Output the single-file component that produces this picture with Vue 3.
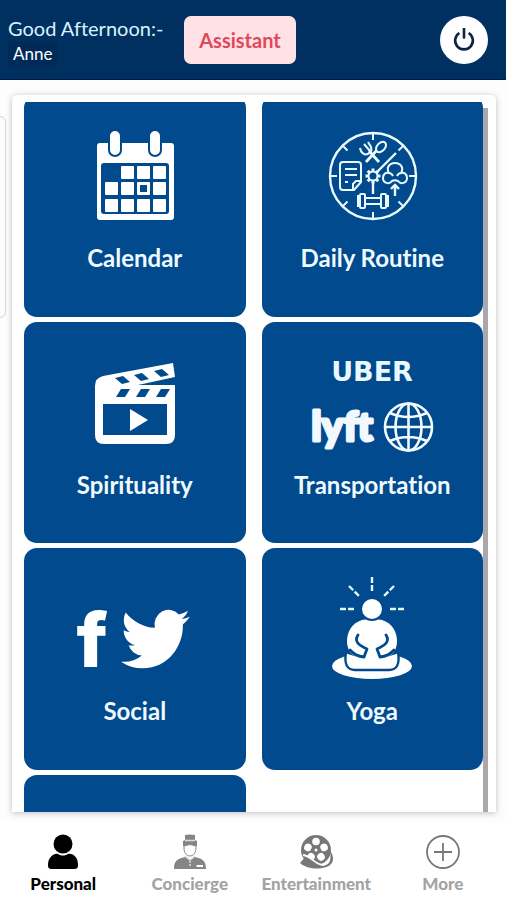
<script setup>
import { ref } from 'vue'

const user = ref('Anne')
const activeTab = ref('personal')

const cards = [
  { id: 'calendar', label: 'Calendar' },
  { id: 'routine', label: 'Daily Routine' },
  { id: 'spirituality', label: 'Spirituality' },
  { id: 'transportation', label: 'Transportation' },
  { id: 'social', label: 'Social' },
  { id: 'yoga', label: 'Yoga' },
  { id: 'blank', label: '' }
]

const tabs = [
  { id: 'personal', label: 'Personal' },
  { id: 'concierge', label: 'Concierge' },
  { id: 'entertainment', label: 'Entertainment' },
  { id: 'more', label: 'More' }
]

// day squares in the calendar icon
const days = [
  [121, 167], [137, 167], [153, 167],
  [105, 183], [121, 183], [137, 183], [153, 183],
  [105, 200], [121, 200], [137, 200], [153, 200]
]

const ticks = [0, 45, 90, 135, 180, 225, 270, 315]
const holes = [0, 72, 144, 216, 288]
</script>

<template>
  <div class="app">
    <header class="header">
      <div class="greeting">
        <span class="hello">Good Afternoon:-</span>
        <span class="name">{{ user }}</span>
      </div>
      <button class="assistant">Assistant</button>
      <button class="power" aria-label="Log out">
        <svg width="24" height="24" viewBox="0 0 26 26" fill="none" stroke="#0b2340" stroke-width="2.8">
          <path d="M8 5.400a9.600 9.600 0 1 0 10 0" />
          <path d="M13 0v11.500" />
        </svg>
      </button>
    </header>

    <main class="main">
      <div class="side-edge"></div>
      <section class="panel">
        <div class="scroller">
          <div class="grid">
            <button v-for="card in cards" :key="card.id" class="card" :aria-label="card.label || 'Open'">
              <svg v-if="card.id === 'calendar'" class="icon" viewBox="55 120 160 110">
                <rect x="97" y="144" width="77" height="77" rx="3" fill="#fff" />
                <rect x="101" y="164" width="68" height="51" rx="3" fill="#004a8d" />
                <rect x="109" y="131" width="12" height="26" rx="6" fill="#fff" stroke="#004a8d" stroke-width="2" />
                <rect x="149" y="131" width="12" height="26" rx="6" fill="#fff" stroke="#004a8d" stroke-width="2" />
                <rect v-for="(d, i) in days" :key="i" :x="d[0]" :y="d[1]" width="13" height="13" rx="1" fill="#fff" />
                <rect x="140" y="186" width="7" height="7" fill="#004a8d" />
              </svg>

              <svg v-else-if="card.id === 'routine'" class="icon" viewBox="292 119 160 110" fill="none" stroke="#e9fbff" stroke-width="2">
                <circle cx="373" cy="176" r="43" stroke-width="2.4" />
                <path v-for="t in ticks" :key="t" d="M373 133v7" :transform="`rotate(${t} 373 176)`" />
                <circle cx="373" cy="176" r="4.5" />
                <path v-for="t in ticks" :key="'g' + t" d="M373 168.500v3" stroke-width="3" :transform="`rotate(${t} 373 176)`" />
                <path d="M377 172l19-19M373 182v12" stroke-width="2.4" />
                <path d="M379 162l-10-11M366 162l11-12" stroke-width="2.8" />
                <path d="M360 148c1 6 6 8 9 5M364 144l6 7M368 142l3 5c1 4 0 5-3 7" />
                <ellipse cx="381" cy="147" rx="4" ry="6" transform="rotate(42 381 147)" />
                <path d="M343 162h15a3 3 0 0 1 3 3v17l-7 8h-11a3 3 0 0 1-3-3v-22a3 3 0 0 1 3-3zM361 181h-5l-3 3v6M345 169h12M345 175h12M345 182h3" />
                <path d="M392 181c-3 4-9 2-9-3 0-4 3-6 6-5-3-5 0-10 6-10s9 5 6 10c3-1 6 1 6 5 0 5-6 7-9 3-2-1-4-1-6 0zM389 173c2 0 3 1 4 3M401 173c-2 0-3 1-4 3" />
                <path d="M395 196v-11M391 189l4-4 4 4" stroke-width="2.400" />
                <path d="M365 198h16M365 204h16" />
                <rect x="360" y="194" width="5" height="14" rx="1" />
                <rect x="381" y="194" width="5" height="14" rx="1" />
                <path d="M360 196h-2v10h2M386 196h2v10h-2" />
              </svg>

              <svg v-else-if="card.id === 'spirituality'" class="icon" viewBox="55 346 160 110" fill="#fff">
                <path d="M95 386q0-8 8-10l70-13 2 14-37 8h37v50q0 9-9 9h-62q-9 0-9-9z" />
                <path d="M103 404h64v31h-64z" fill="#004a8d" />
                <path d="M115 378l8-2 7 6-8 2zM134 375l8-2 7 6-8 2zM154 371l8-2 7 6-8 2zM121 389h9l-5 8h-9zM141 389h9l-5 8h-9zM161 389h9l-5 8h-9z" fill="#004a8d" />
                <path d="M130 409l18 11-18 11z" />
              </svg>

              <svg v-else-if="card.id === 'transportation'" class="icon" viewBox="292 346 160 110">
                <text class="uber" x="372" y="381" text-anchor="middle">UBER</text>
                <text class="lyft" x="342" y="441" text-anchor="middle">lyft</text>
                <g fill="none" stroke="#f2fbff" stroke-width="2.600">
                  <circle cx="408.500" cy="427" r="23.500" />
                  <ellipse cx="408.500" cy="427" rx="13" ry="23.500" />
                  <path d="M408.500 403v48M385 427h47M390 413q18 8 37 0M390 441q18-8 37 0" />
                </g>
              </svg>

              <svg v-else-if="card.id === 'social'" class="icon" viewBox="55 571 160 110" fill="#fff">
                <text class="facebook" x="92" y="666" text-anchor="middle">f</text>
                <path transform="translate(121 602) scale(2.87 3)" d="M23.953 4.570a10 10 0 01-2.825.775 4.958 4.958 0 002.163-2.723c-.951.555-2.005.959-3.127 1.184a4.920 4.920 0 00-8.384 4.482C7.690 8.095 4.067 6.130 1.640 3.162a4.822 4.822 0 00-.666 2.475c0 1.710.870 3.213 2.188 4.096a4.904 4.904 0 01-2.228-.616v.060a4.923 4.923 0 003.946 4.827 4.996 4.996 0 01-2.212.085 4.936 4.936 0 004.604 3.417 9.867 9.867 0 01-6.102 2.105c-.390 0-.779-.023-1.170-.067a13.995 13.995 0 007.557 2.209c9.053 0 13.998-7.496 13.998-13.985 0-.210 0-.420-.015-.630A9.935 9.935 0 0024 4.590z" />
              </svg>

              <svg v-else-if="card.id === 'yoga'" class="icon" viewBox="292 572 160 110" fill="#fff">
                <ellipse cx="372" cy="666" rx="40" ry="13" />
                <path d="M346 652c-2 12 1 18 9 18h34c8 0 11-6 9-18l-9 3h-34z" stroke="#004a8d" stroke-width="2.400" />
                <path d="M362 620q10-2 20 0c10 3 15 12 15 21 0 7-3 12-6 14l-10 4h-18l-10-4c-3-2-6-7-6-14 0-9 5-18 15-21z" />
                <path d="M358 635c-4 6 0 10 9 14l-3 8q-9-1-14-7M386 635c4 6 0 10-9 14l3 8q9-1 14-7" fill="none" stroke="#004a8d" stroke-width="2.800" stroke-linecap="round" stroke-linejoin="round" />
                <circle cx="372" cy="609" r="11" stroke="#004a8d" stroke-width="2" />
                <path d="M372 577v14M349 586l11 11M394 586l-11 11M340 609h14M390 609h14" stroke="#dffaff" stroke-width="2.400" stroke-dasharray="6 2" />
              </svg>

              <span class="label">{{ card.label }}</span>
            </button>
          </div>
          <div class="bar"></div>
        </div>
      </section>
    </main>

    <nav class="tabs">
      <button
        v-for="tab in tabs"
        :key="tab.id"
        class="tab"
        :class="{ active: activeTab === tab.id }"
        @click="activeTab = tab.id"
      >
        <svg v-if="tab.id === 'personal'" class="tab-icon" viewBox="0 0 36 36" fill="currentColor">
          <circle cx="18" cy="10" r="9.500" />
          <path d="M3 31c0-8 6-12 10-11 4 2 6 2 10 0 5-1 10 3 10 11 0 3-1 4-4 4H7c-3 0-4-1-4-4z" />
        </svg>
        <svg v-else-if="tab.id === 'concierge'" class="tab-icon" viewBox="0 0 36 36" fill="#858585">
          <path d="M13 1q5-1 10 0v5l2 1v5H11V7l2-1z" />
          <path d="M12 12q6-3 12 0v2c0 5-3 8-6 8s-6-3-6-8z" fill="#fff" stroke="#858585" />
          <path d="M2 35c0-8 3-10 11-12l5 3 5-3c8 2 11 4 11 12z" />
          <path d="M13 6.500h10M13 22l5 4 5-4M17 28h2M17 31h2" fill="none" stroke="#ddd" stroke-width="1.500" />
          <path d="M24 31h7v2h-6z" fill="#fff" />
        </svg>
        <svg v-else-if="tab.id === 'entertainment'" class="tab-icon" viewBox="0 0 36 36">
          <circle cx="18" cy="16" r="15" fill="#777" />
          <circle v-for="h in holes" :key="h" cx="18" cy="7.500" r="3.800" fill="#fff" :transform="`rotate(${h} 18 16)`" />
          <circle cx="18" cy="16" r="1.500" fill="#fff" />
          <path d="M2 29l6-7c8 3 12 12 20 9 5-2 5-8 4-14 4 4 4 11 0 14-5 4-21 6-30-2z" fill="#777" />
          <path d="M5 21c9 1 11 10 21 10" fill="none" stroke="#fff" stroke-width="1.800" />
        </svg>
        <svg v-else class="tab-icon" viewBox="0 0 36 36" fill="none" stroke="#777" stroke-width="1.800">
          <circle cx="18" cy="18" r="16" />
          <path d="M18 9v18M9 18h18" />
        </svg>
        <span>{{ tab.label }}</span>
      </button>
    </nav>
  </div>
</template>

<style>
body {
  margin: 0;
  background: #fdfdfd;
}
</style>

<style scoped>
.app {
  display: flex;
  flex-direction: column;
  height: 100vh;
  font-family: Lato, "Open Sans", sans-serif;
}

button {
  border: none;
  padding: 0;
  font-family: inherit;
  font-variant-ligatures: none;
  cursor: pointer;
}

.header {
  display: flex;
  align-items: center;
  box-sizing: border-box;
  height: 80px;
  padding: 0 18px 0 8px;
  background: #003060;
  border-bottom: 1px solid #001a4d;
}

.greeting {
  display: flex;
  flex-direction: column;
  width: 176px;
  padding-top: 2px;
  color: #d9f3fb;
}

.hello {
  font-size: 20px;
  line-height: 26px;
  font-variant-ligatures: none;
}

.name {
  align-self: flex-start;
  padding: 0 5px;
  font-size: 17px;
  line-height: 26px;
  color: #fff;
  background: #002b58;
}

.assistant {
  width: 112px;
  height: 48px;
  border-radius: 7px;
  background: #ffe2e6;
  color: #e2465b;
  font-size: 20px;
  font-weight: 700;
}

.power {
  display: flex;
  align-items: center;
  justify-content: center;
  width: 48px;
  height: 48px;
  margin-left: auto;
  border-radius: 50%;
  background: #fff;
}

.main {
  position: relative;
  display: flex;
  flex: 1;
  min-height: 0;
  padding: 15px 10px 10px 12px;
}

.side-edge {
  position: absolute;
  left: -10px;
  top: 36px;
  width: 14px;
  height: 200px;
  border: 1px solid #d4d4d4;
  border-radius: 6px;
}

.panel {
  display: flex;
  flex: 1;
  padding: 7px 8px 0 12px;
  border-radius: 5px 5px 0 0;
  background: #fff;
  box-shadow: 0 1px 6px rgba(0, 0, 0, 0.25);
}

.scroller {
  display: flex;
  flex: 1;
  overflow: hidden;
}

.grid {
  display: grid;
  flex: 1;
  grid-template-columns: 1fr 1fr;
  align-content: start;
  gap: 5px 16px;
  margin-top: -7px;
}

.card {
  display: flex;
  flex-direction: column;
  align-items: center;
  justify-content: flex-start;
  box-sizing: border-box;
  aspect-ratio: 1;
  padding-top: 24px;
  border-radius: 13px;
  background: #004a8d;
  color: #effaff;
}

.icon {
  width: 160px;
  height: 110px;
  overflow: visible;
}

.label {
  margin-top: 13px;
  font-size: 24px;
  font-weight: 700;
  line-height: 32px;
}

.uber {
  font: 700 27px "DejaVu Sans", sans-serif;
  fill: #e9f8ff;
}

.lyft {
  font: 900 41px Lato, sans-serif;
  fill: #f2f8ff;
  stroke: #f2f8ff;
  stroke-width: 3px;
  stroke-linejoin: round;
}

.facebook {
  font: 800 76px Inter, sans-serif;
}

.bar {
  width: 5px;
  margin-top: 6px;
  background: #a9a9ad;
}

.tabs {
  display: grid;
  grid-template-columns: repeat(4, 1fr);
  height: 78px;
  background: #fff;
}

.tab {
  display: flex;
  flex-direction: column;
  align-items: center;
  padding-top: 12px;
  gap: 4px;
  background: none;
  color: #a3a3a3;
  font-size: 17px;
  font-weight: 900;
  line-height: 20px;
}

.tab.active {
  color: #000;
}

.tab-icon {
  width: 36px;
  height: 36px;
}
</style>
